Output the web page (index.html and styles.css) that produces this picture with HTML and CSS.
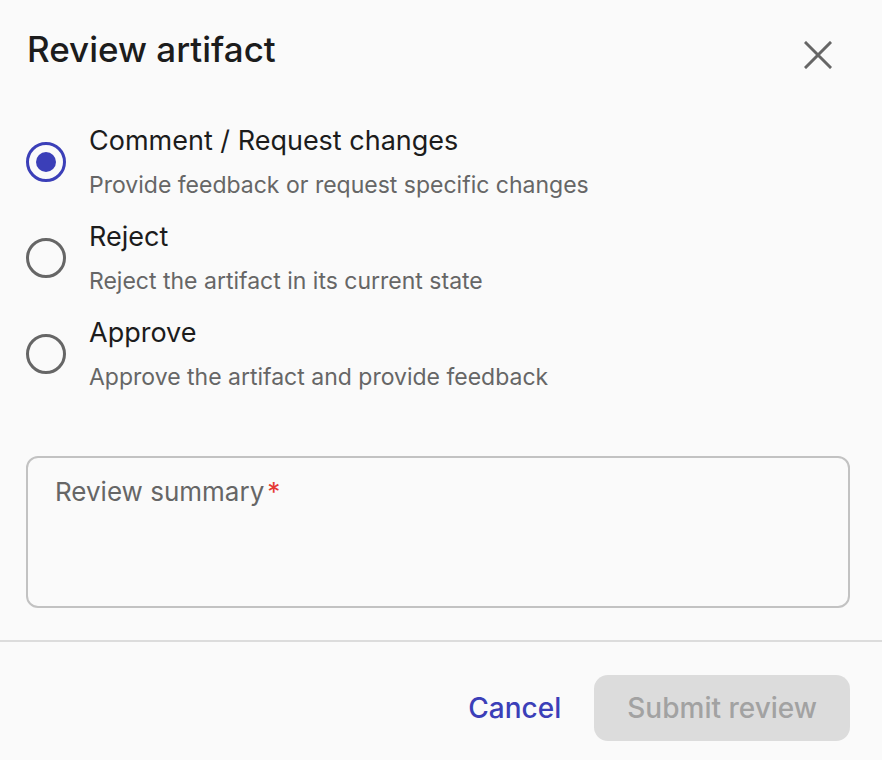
FILE: index.html
```html
<!DOCTYPE html>
<html lang="en">
<head>
<meta charset="utf-8">
<title>Review artifact</title>
<link rel="stylesheet" href="styles.css">
</head>
<body>
<div class="dialog">
  <div class="header">
    <h1 class="title">Review artifact</h1>
    <button class="close" aria-label="Close">
      <svg viewBox="0 0 28 28" width="28" height="28"><path d="M2 2 L26 26 M26 2 L2 26" stroke="#666" stroke-width="3" stroke-linecap="square" fill="none"/></svg>
    </button>
  </div>
  <div class="options">
    <label class="option">
      <span class="radio checked"><span class="dot"></span></span>
      <span class="text">
        <span class="opt-title">Comment / Request changes</span>
        <span class="opt-desc">Provide feedback or request specific changes</span>
      </span>
    </label>
    <label class="option">
      <span class="radio"></span>
      <span class="text">
        <span class="opt-title">Reject</span>
        <span class="opt-desc">Reject the artifact in its current state</span>
      </span>
    </label>
    <label class="option">
      <span class="radio"></span>
      <span class="text">
        <span class="opt-title">Approve</span>
        <span class="opt-desc">Approve the artifact and provide feedback</span>
      </span>
    </label>
  </div>
  <div class="field">
    <span class="field-label">Review summary<span class="req">*</span></span>
  </div>
  <div class="divider"></div>
  <div class="footer">
    <button class="btn btn-text">Cancel</button>
    <button class="btn btn-disabled" disabled>Submit review</button>
  </div>
</div>
</body>
</html>
```
FILE: styles.css
```css
html, body {
  margin: 0;
  padding: 0;
  background: #fafafa;
}
body {
  font-family: Inter, "Noto Sans", sans-serif;
  color: #1c1c1c;
  width: 882px;
  height: 760px;
  overflow: hidden;
}
.dialog {
  display: flex;
  flex-direction: column;
}
.header {
  display: flex;
  justify-content: space-between;
  align-items: center;
  padding: 27px 50px 0 27px;
  height: 44px;
}
.title {
  margin: 0;
  font-size: 35px;
  line-height: 44px;
  font-weight: 500;
  color: #1c1c1c;
}
.close {
  border: 0;
  background: none;
  padding: 0;
  width: 28px;
  height: 28px;
  margin-top: 12px;
  display: flex;
}
.options {
  display: flex;
  flex-direction: column;
  gap: 20px;
  padding: 53px 32px 0 26px;
}
.option {
  display: flex;
  align-items: center;
  gap: 23px;
}
.radio {
  box-sizing: border-box;
  width: 40px;
  height: 40px;
  border: 3.5px solid #666;
  border-radius: 50%;
  display: flex;
  align-items: center;
  justify-content: center;
  flex: none;
}
.radio.checked {
  border-color: #3b3fb8;
}
.dot {
  width: 20px;
  height: 20px;
  border-radius: 50%;
  background: #3b3fb8;
}
.text {
  display: flex;
  flex-direction: column;
  gap: 12px;
}
.opt-title {
  font-size: 27px;
  line-height: 34px;
  color: #1c1c1c;
}
.opt-desc {
  font-size: 23px;
  line-height: 30px;
  color: #666;
}
.field {
  box-sizing: border-box;
  margin: 64px 32px 0 26px;
  height: 152px;
  border: 2px solid #c2c2c2;
  border-radius: 12px;
  padding: 17px 27px;
}
.field-label {
  font-size: 26px;
  line-height: 34px;
  color: #666;
}
.req {
  color: #e53935;
  margin-left: 3px;
}
.divider {
  margin-top: 32px;
  height: 2px;
  background: #dcdcdc;
}
.footer {
  display: flex;
  justify-content: flex-end;
  padding: 33px 32px 0 26px;
}
.btn {
  font-family: inherit;
  font-size: 28px;
  font-weight: 500;
  height: 66px;
  padding: 0 33px;
  border: 0;
  border-radius: 14px;
  background: none;
}
.btn-text {
  color: #3b3fb8;
}
.btn-disabled {
  background: #dcdcdc;
  color: #a2a2a2;
}
```
